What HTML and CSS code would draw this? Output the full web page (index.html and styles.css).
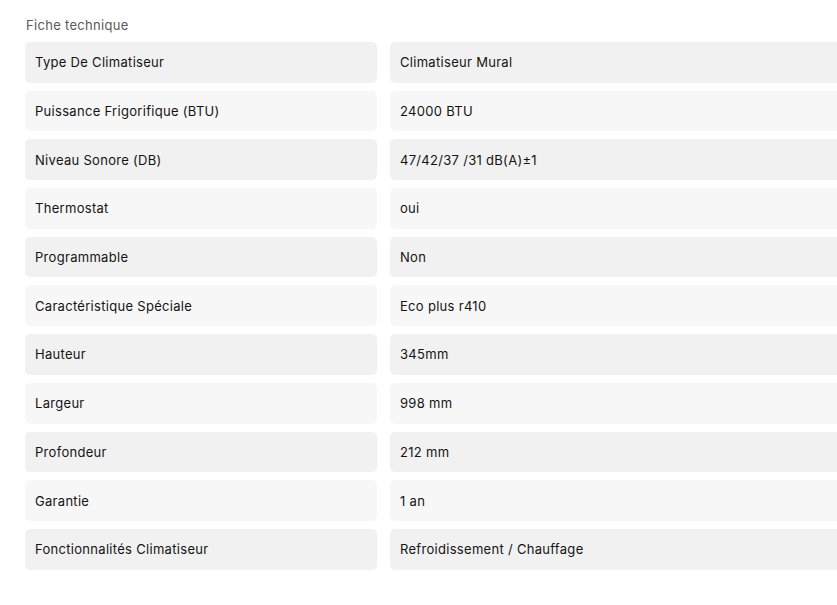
FILE: index.html
```html
<!DOCTYPE html>
<html lang="fr">
<head>
<meta charset="utf-8">
<title>Fiche technique</title>
<link rel="stylesheet" href="styles.css">
</head>
<body>
<section class="sheet">
  <h2 class="sheet-title">Fiche technique</h2>
  <div class="specs">
    <div class="row odd"><div class="cell">Type De Climatiseur</div><div class="cell">Climatiseur Mural</div></div>
    <div class="row even"><div class="cell">Puissance Frigorifique (BTU)</div><div class="cell">24000 BTU</div></div>
    <div class="row odd"><div class="cell">Niveau Sonore (DB)</div><div class="cell">47/42/37 /31 dB(A)±1</div></div>
    <div class="row even"><div class="cell">Thermostat</div><div class="cell">oui</div></div>
    <div class="row odd"><div class="cell">Programmable</div><div class="cell">Non</div></div>
    <div class="row even"><div class="cell">Caractéristique Spéciale</div><div class="cell">Eco plus r410</div></div>
    <div class="row odd"><div class="cell">Hauteur</div><div class="cell">345mm</div></div>
    <div class="row even"><div class="cell">Largeur</div><div class="cell">998 mm</div></div>
    <div class="row odd"><div class="cell">Profondeur</div><div class="cell">212 mm</div></div>
    <div class="row even"><div class="cell">Garantie</div><div class="cell">1 an</div></div>
    <div class="row odd"><div class="cell">Fonctionnalités Climatiseur</div><div class="cell">Refroidissement / Chauffage</div></div>
  </div>
</section>
</body>
</html>
```
FILE: styles.css
```css
html, body {
  margin: 0;
  padding: 0;
  background: #ffffff;
  overflow: hidden;
}
body {
  font-family: Inter, "Liberation Sans", sans-serif;
  color: #141414;
}
.sheet {
  width: 820px;
  padding: 17px 0 0 25px;
}
.sheet-title {
  margin: 0 0 8px 1px;
  font-size: 13px;
  font-weight: 400;
  line-height: 17px;
  letter-spacing: 0.3px;
  color: #5a5a5a;
}
.specs {
  display: flex;
  flex-direction: column;
  gap: 8px;
}
.row {
  display: grid;
  grid-template-columns: 351.7px 1fr;
  column-gap: 13.3px;
}
.cell {
  height: 40.7px;
  display: flex;
  align-items: center;
  padding: 0 10px;
  border-radius: 5px;
  font-size: 13px;
  letter-spacing: 0.3px;
}
.odd .cell { background: #f1f1f1; }
.even .cell { background: #f7f7f7; }
```
